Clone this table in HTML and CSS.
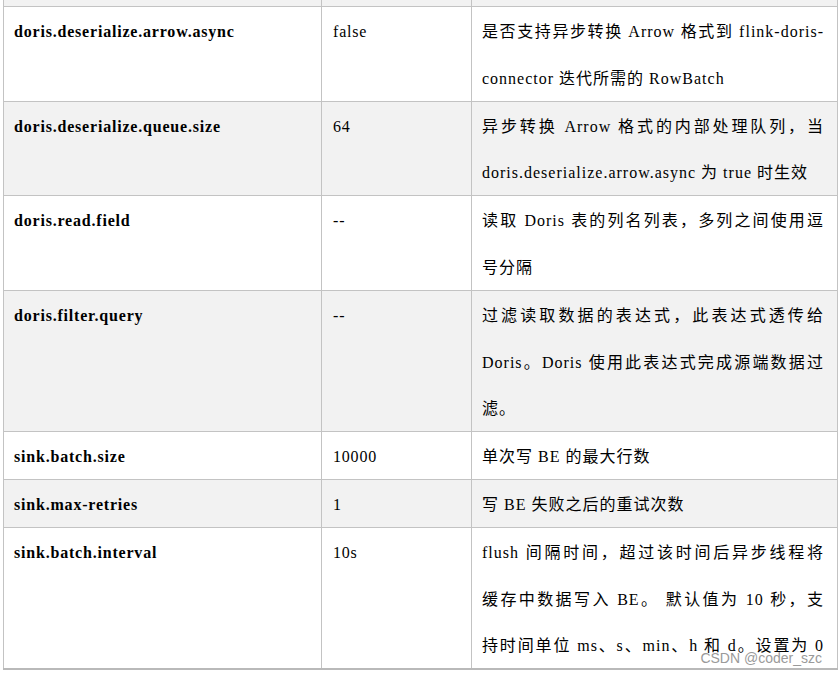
FILE: index.html
```html
<!DOCTYPE html>
<html lang="zh-CN">
<head>
<meta charset="utf-8">
<title>Flink Doris Connector 参数</title>
<link rel="stylesheet" href="styles.css">
</head>
<body>
<div class="page">
  <table class="params">
    <colgroup>
      <col class="c-name">
      <col class="c-default">
      <col class="c-desc">
    </colgroup>
    <tbody>
      <tr class="stub shade"><td></td><td></td><td></td></tr>
      <tr>
        <td class="name"><span class="ln">doris.deserialize.arrow.async</span></td>
        <td class="val"><span class="ln">false</span></td>
        <td class="desc"><span class="ln full">是否支持异步转换 Arrow 格式到 flink-doris-</span><span class="ln">connector 迭代所需的 RowBatch</span></td>
      </tr>
      <tr class="shade">
        <td class="name"><span class="ln">doris.deserialize.queue.size</span></td>
        <td class="val"><span class="ln">64</span></td>
        <td class="desc"><span class="ln full">异步转换 Arrow 格式的内部处理队列，当</span><span class="ln">doris.deserialize.arrow.async 为 true 时生效</span></td>
      </tr>
      <tr>
        <td class="name"><span class="ln">doris.read.field</span></td>
        <td class="val"><span class="ln">--</span></td>
        <td class="desc"><span class="ln full">读取 Doris 表的列名列表，多列之间使用逗</span><span class="ln">号分隔</span></td>
      </tr>
      <tr class="shade">
        <td class="name"><span class="ln">doris.filter.query</span></td>
        <td class="val"><span class="ln">--</span></td>
        <td class="desc"><span class="ln full">过滤读取数据的表达式，此表达式透传给</span><span class="ln full">Doris。Doris 使用此表达式完成源端数据过</span><span class="ln">滤。</span></td>
      </tr>
      <tr>
        <td class="name"><span class="ln">sink.batch.size</span></td>
        <td class="val"><span class="ln">10000</span></td>
        <td class="desc"><span class="ln">单次写 BE 的最大行数</span></td>
      </tr>
      <tr class="shade">
        <td class="name"><span class="ln">sink.max-retries</span></td>
        <td class="val"><span class="ln">1</span></td>
        <td class="desc"><span class="ln">写 BE 失败之后的重试次数</span></td>
      </tr>
      <tr class="last">
        <td class="name"><span class="ln">sink.batch.interval</span></td>
        <td class="val"><span class="ln">10s</span></td>
        <td class="desc"><span class="ln full">flush 间隔时间，超过该时间后异步线程将</span><span class="ln full">缓存中数据写入 BE。 默认值为 10 秒，支</span><span class="ln full">持时间单位 ms、s、min、h 和 d。设置为 0</span></td>
      </tr>
    </tbody>
  </table>
  <div class="watermark">CSDN @coder_szc</div>
</div>
</body>
</html>
```

FILE: styles.css
```css
html, body {
  margin: 0;
  padding: 0;
  background: #ffffff;
}

body {
  font-family: "Liberation Serif", "Noto Sans CJK SC", serif;
  color: #000000;
}

.page {
  position: relative;
  height: 674px;
  overflow: hidden;
  padding-left: 3px;
}

.params {
  border-collapse: collapse;
  table-layout: fixed;
  width: 834px;
  font-size: 16px;
  line-height: 46.8px;
}

.c-name { width: 318px; }
.c-default { width: 150px; }
.c-desc { width: 366px; }

.params td {
  border: 1px solid #c3c3c3;
  padding: 0 10px 0 11px;
  vertical-align: top;
  letter-spacing: 0.8px;
}

.params td.name {
  padding-left: 10px;
}

.params td.desc {
  padding: 0 13px 0 10px;
  letter-spacing: 1px;
}

.params tr.shade td {
  background: #f2f2f2;
}

.params tr.stub td {
  height: 6px;
  padding: 0;
  line-height: 0;
  font-size: 0;
  border-top: none;
}

.params tr.last td {
  border-bottom: 2px solid #b9b9b9;
}

.name {
  font-weight: bold;
}

.ln {
  display: block;
  box-sizing: border-box;
  height: 46.8px;
  padding-top: 4px;
  line-height: 42.8px;
}

.ln.full {
  text-align: justify;
  text-align-last: justify;
}

.watermark {
  position: absolute;
  right: 18px;
  bottom: 8px;
  font-family: "Liberation Sans", "Noto Sans", sans-serif;
  font-size: 14px;
  color: #9a9a9a;
  line-height: 16px;
}
```
